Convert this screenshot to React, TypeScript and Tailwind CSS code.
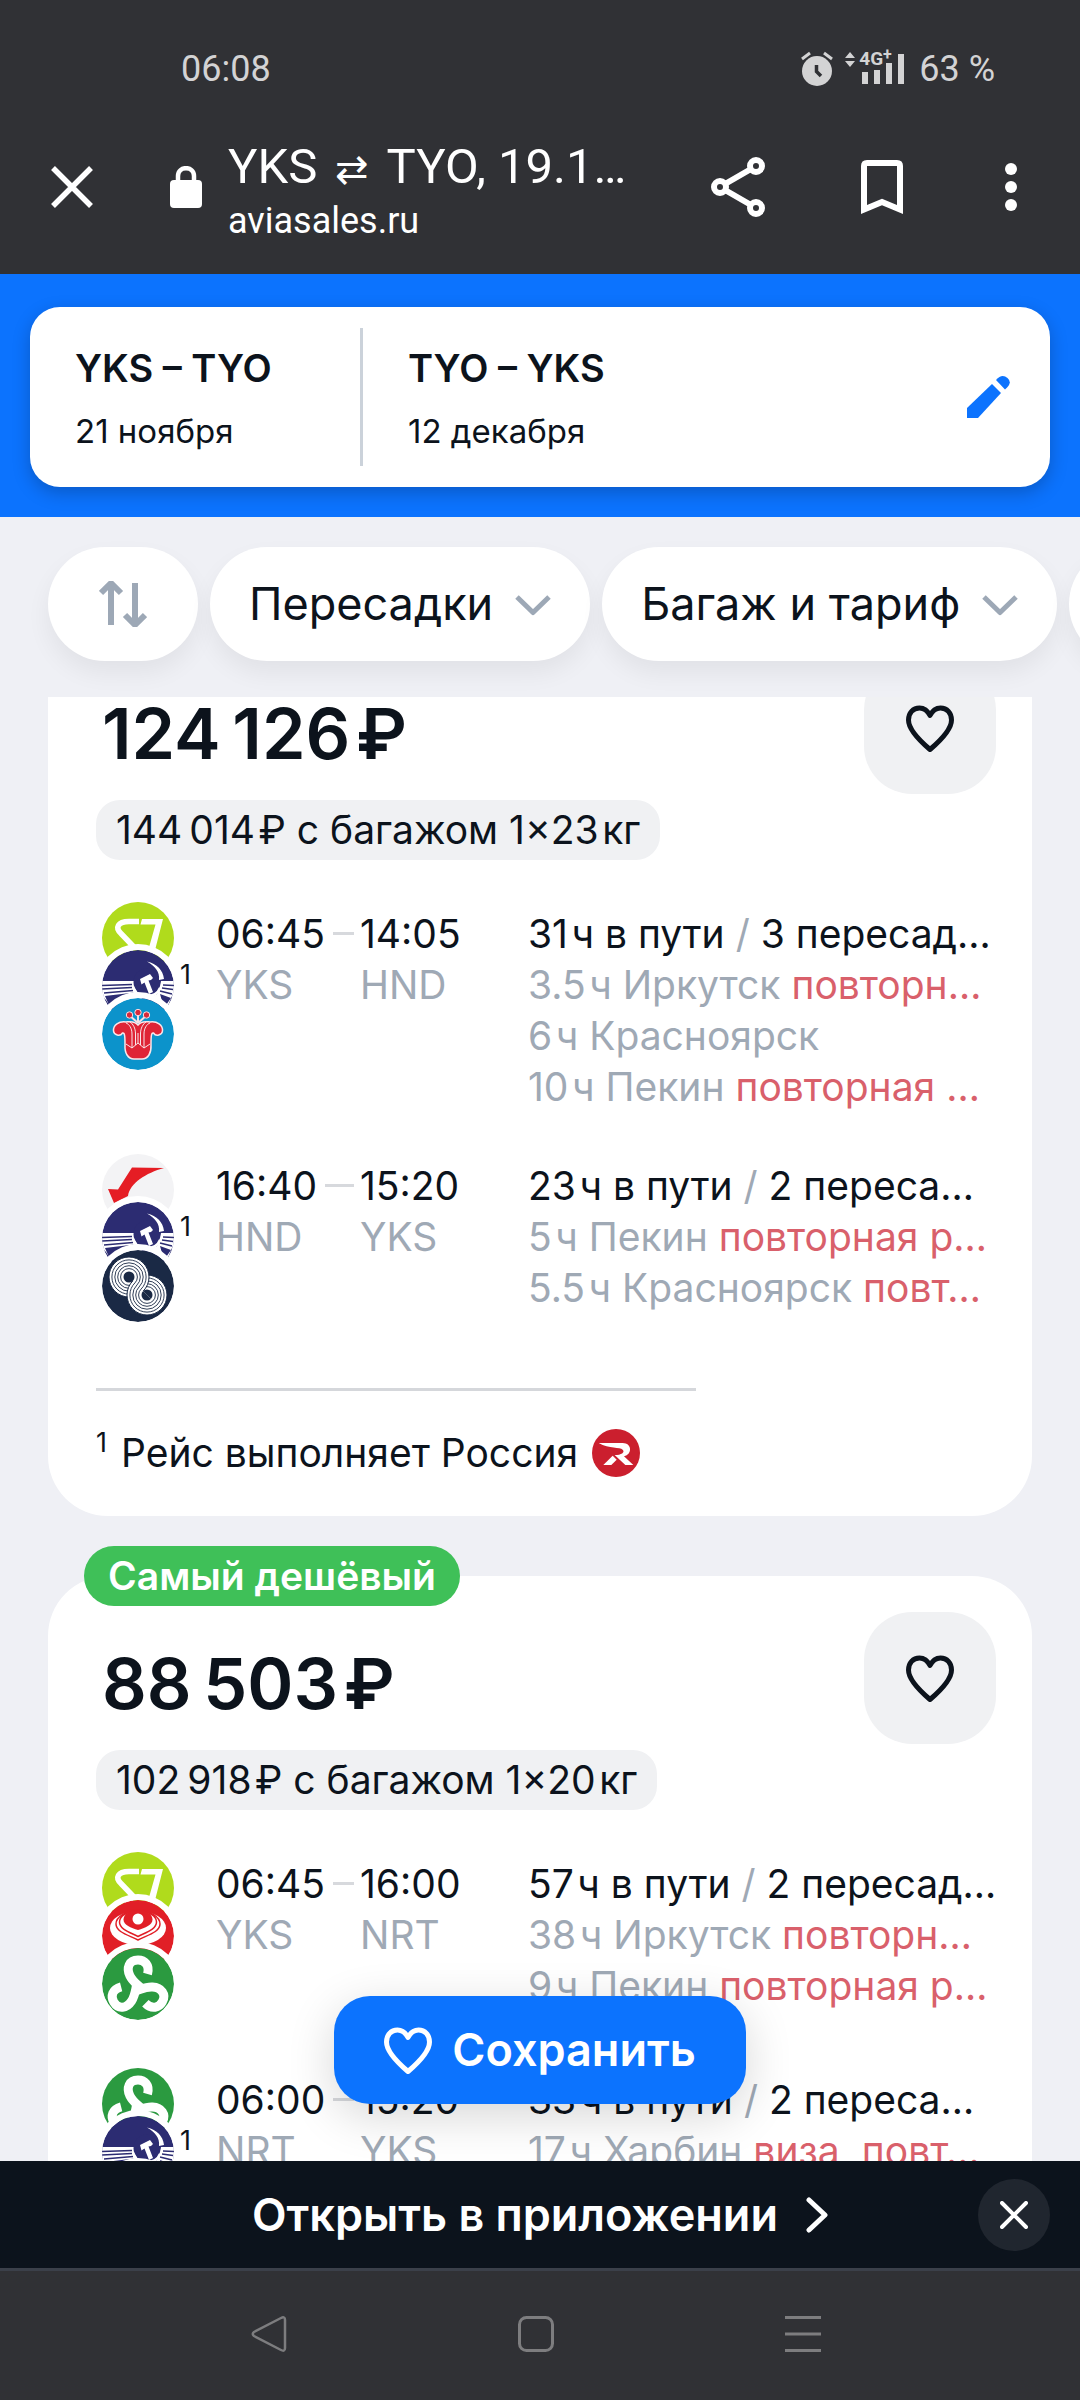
import React from "react";

// Hair space before units, thin space between thousands.
const H = "\u200a";
const T = "\u2009";

function Heart({ className }: { className: string }) {
  return (
    <svg viewBox="0 0 48 48" fill="none" stroke="currentColor" strokeWidth="5" strokeLinejoin="round" className={className} aria-hidden="true">
      <path d="M24 11.5C21.5 6.500 17.500 4 13.500 4C7 4 2.500 9 2.500 16C2.500 26 14 37 24 45.500C34 37 45.500 26 45.500 16C45.500 9 41 4 34.500 4C30.500 4 26.500 6.500 24 11.500Z" />
    </svg>
  );
}

function ChevronDown() {
  return (
    <svg viewBox="0 0 36 36" fill="none" stroke="#9da8b6" strokeWidth="5" strokeLinecap="butt" className="size-9 shrink-0" aria-hidden="true">
      <path d="M2 11L18 26.500L34 11" strokeLinejoin="round" />
    </svg>
  );
}

function S7() {
  return (
    <>
      <circle cx="36" cy="36" r="36" fill="#b0db1c" />
      <path d="M37 19.500H27C15.500 19.500 13 26 19 31.500L31 44L22 56" fill="none" stroke="#fff" strokeWidth="5.500" />
      <path d="M40 17H61L51 56H44L53.500 22.500H38.500Z" fill="#fff" />
    </>
  );
}

function Aeroflot() {
  return (
    <>
      <circle cx="36" cy="36" r="36" fill="#2c2c72" />
      <path d="M0 31H32L36 45L42 47L14 66L4 50L0 46Z" fill="#fff" />
      <path d="M72 31H59L55 44L48 47L64 60L70 46L72 42Z" fill="#fff" />
      <g stroke="#2c2c72" strokeWidth="1.300" fill="none">
        <path d="M0 35.500L30 34.500M0 39L30 37.500M2 43L31 40.500M61 35L72 35.500M60 38L71 39.500M58 41L70 44" />
      </g>
      <path d="M3 46L32 42.500L20 48L10 62ZM69 48L58 44L62 58Z" fill="#2c2c72" />
      <circle cx="45" cy="32" r="13.500" fill="#2c2c72" />
      <path d="M45 11.500C55 14 61 20 62 29L57 30C58 22 53 16 45 11.500Z" fill="#fff" />
      <path d="M38 29L48 24L51 28L49 30L46.500 30.500L51 42L47 44L42.500 32.500L39.500 34.500Z" fill="#fff" />
      <path d="M31 37C33 43 38 47 45 46C52 46 56 43 58 38" fill="none" stroke="#fff" strokeWidth="2.500" />
    </>
  );
}

function ChinaSouthern() {
  return (
    <>
      <circle cx="36" cy="36" r="36" fill="#0c93cb" />
      <path d="M36 25L27 17M36 25V14M36 25L45 17" stroke="#f7dfe4" strokeWidth="2" />
      <g fill="#d8283a" stroke="#f7dfe4" strokeWidth="1">
        <circle cx="27.500" cy="17" r="3.200" />
        <circle cx="36" cy="14.500" r="3.200" />
        <circle cx="44.500" cy="17" r="3.200" />
      </g>
      <path d="M36 27C32 22 26 24 24 24C17 23 11 27 11.500 33C12 37 18 39 20.500 35C23 34 23 40 23 47C22.500 55 26 61 32 61H40C46 61 49.500 55 49 47C49 40 49 34 51.500 35C54 39 60 37 60.500 33C61 27 55 23 48 24C46 24 40 22 36 27Z" fill="#df2436" stroke="#f9e6ea" strokeWidth="1.500" />
      <path d="M24 46L30 50L36 45L42 50L48 46M30 50V36C30 30 27 26 24 25M42 50V36C42 30 45 26 48 25M36 45V35M33.500 47V36C33.500 30 31 26 28 24M38.500 47V36C38.500 30 41 26 44 24" fill="none" stroke="#f9e6ea" strokeWidth="1" />
    </>
  );
}

function RedSwoosh() {
  return (
    <>
      <circle cx="36" cy="36" r="36" fill="#f3f3f5" />
      <path d="M30 13.500L62 14C44 19 28 29 26 42L12 49L6 35L16 35.500Z" fill="#e51d24" />
    </>
  );
}

function Ring({ cx, cy }: { cx: number; cy: number }) {
  return (
    <>
      <circle cx={cx} cy={cy} r="20" fill="#fff" stroke="#1a2945" strokeWidth="1" />
      {[8.4, 11.300, 14.200, 17.100].map((r) => (
        <circle key={r} cx={cx} cy={cy} r={r} fill="none" stroke="#1a2945" strokeWidth="0.9" />
      ))}
      <circle cx={cx} cy={cy} r="5.500" fill="#1a2945" />
    </>
  );
}

function Rings() {
  return (
    <>
      <clipPath id="lower-half">
        <path d="M0 0L72 72H0Z" />
      </clipPath>
      <circle cx="36" cy="36" r="36" fill="#1a2945" />
      <Ring cx={45} cy={45} />
      <Ring cx={27} cy={27} />
      <g clipPath="url(#lower-half)">
        <Ring cx={45} cy={45} />
      </g>
    </>
  );
}

function Lotus() {
  return (
    <>
      <circle cx="36" cy="36" r="36" fill="#e11f27" />
      <ellipse cx="36" cy="28" rx="28" ry="17" fill="#fff" />
      <g fill="#fff" stroke="#e11f27" strokeWidth="1.500">
        <path d="M36 11C49 11 58 17 58 24C58 32 46 35 36 40C26 35 14 32 14 24C14 17 23 11 36 11Z" />
        <path d="M36 11C47 11 54.500 16 54.500 22C54.500 29 45 32 36 36.500C27 32 17.500 29 17.500 22C17.500 16 25 11 36 11Z" />
      </g>
      <path d="M16 16Q36 6 56 16L50 12Q36 6 22 12Z" fill="#e11f27" />
      <path d="M36 10C45 10 50.500 14.500 50.500 19.500C50.500 25 43 28 36 30C29 28 21.500 25 21.500 19.500C21.500 14.500 27 10 36 10Z" fill="#e11f27" />
      <circle cx="36" cy="19" r="5.500" fill="#fff" />
    </>
  );
}

function Spring() {
  const arm = "M45.500 26C48 17 42.500 12 36 12C27 12 24 20 28 28C31 34 36 37 40 41";
  return (
    <>
      <circle cx="36" cy="36" r="36" fill="#2b9a40" />
      <g fill="none" stroke="#fff" strokeWidth="9">
        <path d={arm} />
        <path d={arm} transform="rotate(120 36 40)" />
        <path d={arm} transform="rotate(240 36 40)" />
      </g>
      <circle cx="36" cy="40" r="6" fill="#fff" />
    </>
  );
}

function Rossiya() {
  return (
    <>
      <circle cx="36" cy="36" r="36" fill="#cb1f2e" />
      <path d="M10 21H46C60 21 61 38 48 41L62 54H50L34 39C44 39 50 35 46 31C42 27 26 30 10 21Z" fill="#fff" />
      <path d="M17 54L31 40L37 46L29 54Z" fill="#fff" />
    </>
  );
}

type LogoKind = "s7" | "aeroflot" | "southern" | "swoosh" | "rings" | "lotus" | "spring";
const LOGOS: Record<LogoKind, () => React.JSX.Element> = {
  s7: S7,
  aeroflot: Aeroflot,
  southern: ChinaSouthern,
  swoosh: RedSwoosh,
  rings: Rings,
  lotus: Lotus,
  spring: Spring,
};

type Stop = { text: string; warn?: string };
type Leg = {
  logos: LogoKind[];
  note?: boolean;
  dep: string;
  arr: string;
  from: string;
  to: string;
  duration: string;
  changes: string;
  stops: Stop[];
};

const FIRST: Leg[] = [
  {
    logos: ["s7", "aeroflot", "southern"], note: true,
    dep: "06:45", arr: "14:05", from: "YKS", to: "HND",
    duration: `31${H}ч в пути`, changes: "3 пересад…",
    stops: [
      { text: `3.5${H}ч Иркутск`, warn: "повторн…" },
      { text: `6${H}ч Красноярск` },
      { text: `10${H}ч Пекин`, warn: "повторная …" },
    ],
  },
  {
    logos: ["swoosh", "aeroflot", "rings"], note: true,
    dep: "16:40", arr: "15:20", from: "HND", to: "YKS",
    duration: `23${H}ч в пути`, changes: "2 переса…",
    stops: [
      { text: `5${H}ч Пекин`, warn: "повторная р…" },
      { text: `5.5${H}ч Красноярск`, warn: "повт…" },
    ],
  },
];

const SECOND: Leg[] = [
  {
    logos: ["s7", "lotus", "spring"],
    dep: "06:45", arr: "16:00", from: "YKS", to: "NRT",
    duration: `57${H}ч в пути`, changes: "2 пересад…",
    stops: [
      { text: `38${H}ч Иркутск`, warn: "повторн…" },
      { text: `9${H}ч Пекин`, warn: "повторная р…" },
    ],
  },
  {
    logos: ["spring", "aeroflot", "s7"], note: true,
    dep: "06:00", arr: "15:20", from: "NRT", to: "YKS",
    duration: `33${H}ч в пути`, changes: "2 переса…",
    stops: [{ text: `17${H}ч Харбин`, warn: "виза, повт…" }],
  },
];

function LegRow({ leg }: { leg: Leg }) {
  return (
    <li className="grid grid-cols-[120px_144px_168px_minmax(0,1fr)] text-[39px] leading-[51px]">
      <div className="flex items-center self-start pl-1.5">
        <div className="flex flex-col">
          {leg.logos.map((kind, i) => {
            const Logo = LOGOS[kind];
            return (
              <svg key={i} viewBox="0 0 72 72" className={i === 0 ? "size-[72px]" : "-mt-6 size-[72px] rounded-full ring-6 ring-white"} aria-hidden="true">
                <Logo />
              </svg>
            );
          })}
        </div>
        {leg.note && <span className="-mt-6 pl-1.5 text-[27px] leading-none">1</span>}
      </div>
      <div className="-mb-1.5 pt-1.5">
        <div className="flex items-center">
          <span>{leg.dep}</span>
          <span className="mr-1.5 ml-2 h-[3px] flex-1 bg-[#d7d9dd]" />
        </div>
        <div className="text-[#9fa9b5]">{leg.from}</div>
      </div>
      <div className="-mb-1.5 pt-1.5">
        <div>{leg.arr}</div>
        <div className="text-[#9fa9b5]">{leg.to}</div>
      </div>
      <div className="-mb-1.5 pt-1.5 whitespace-nowrap">
        <div>
          {leg.duration} <span className="text-[#9fa9b5]">/</span> {leg.changes}
        </div>
        {leg.stops.map((s) => (
          <div key={s.text} className="text-[#9fa9b5]">
            {s.text} {s.warn && <span className="text-[#d9606b]">{s.warn}</span>}
          </div>
        ))}
      </div>
    </li>
  );
}

function Ticket({ price, baggage, legs, badge, footnote }: { price: string; baggage: string; legs: Leg[]; badge?: string; footnote?: string }) {
  return (
    <article className="relative rounded-[60px] bg-white pt-9 pr-9 pb-[38px] pl-12">
      {badge && (
        <span className="absolute -top-[30px] left-9 rounded-full bg-[#3fc058] px-6 text-[39px] leading-[60px] font-semibold text-white">{badge}</span>
      )}
      <div className="flex items-start justify-between">
        <h2 className="pt-[30px] pl-1.5 text-[70px] leading-[84px] font-semibold whitespace-nowrap">{price}</h2>
        <button type="button" aria-label="В избранное" className="flex size-[132px] items-center justify-center rounded-[48px] bg-[#f0f1f3]">
          <Heart className="size-12" />
        </button>
      </div>
      <p className="mt-1.5 w-fit rounded-3xl bg-[#f0f1f3] px-5 text-[39px] leading-[60px] whitespace-nowrap">{baggage}</p>
      <ul className="mt-[42px] flex flex-col gap-12">
        {legs.map((leg, i) => (
          <LegRow key={i} leg={leg} />
        ))}
      </ul>
      {footnote && (
        <>
          <hr className="mt-[66px] w-2/3 border-t-[3px] border-[#d5d7db]" />
          <p className="mt-9 flex h-[51px] items-center text-[39px] leading-[51px]">
            <span className="-mt-5 mr-3.5 text-[27px] leading-none">1</span>
            {footnote}
            <svg viewBox="0 0 72 72" className="ml-3.5 size-12" aria-hidden="true">
              <Rossiya />
            </svg>
          </p>
        </>
      )}
    </article>
  );
}

function StatusBar() {
  return (
    <div className="flex h-[138px] items-center justify-between pr-[85px] pl-[181px] text-[36px] text-[#d3d3d4]">
      <span>06:08</span>
      <div className="flex items-center">
        <svg viewBox="0 0 32 36" className="h-9 w-8" aria-hidden="true">
          <circle cx="16" cy="20" r="15" fill="#d3d3d4" />
          <path d="M1 8L9 2M31 8L23 2" stroke="#d3d3d4" strokeWidth="3" />
          <path d="M15.500 14V20.500L20 25" fill="none" stroke="#303135" strokeWidth="3.500" />
        </svg>
        <div className="relative ml-3 h-9 w-[60px]">
          <svg viewBox="0 0 60 36" fill="#d3d3d4" className="h-9 w-[60px]" aria-hidden="true">
            <path d="M0 7L5 1L10 7ZM0 10H10L5 16Z" />
            <path d="M17 21h6v12h-6zM29 19h6v14h-6zM41 12h6v21h-6zM53 3h6v30h-6z" />
          </svg>
          <span className="absolute -top-0.5 left-3.5 text-[19px] leading-5 font-bold">
            4G<span className="align-top text-[16px] leading-3">+</span>
          </span>
        </div>
        <span className="ml-[14px]">63 %</span>
      </div>
    </div>
  );
}

function BrowserBar() {
  return (
    <div className="flex h-[98px] items-center pr-[63px] pl-[51px] text-white">
      <button type="button" aria-label="Закрыть вкладку">
        <svg viewBox="0 0 42 42" className="size-[42px]" stroke="currentColor" strokeWidth="5.500" aria-hidden="true">
          <path d="M2 2L40 40M40 2L2 40" />
        </svg>
      </button>
      <svg viewBox="0 0 32 42" className="ml-[77px] h-[42px] w-8 shrink-0" aria-hidden="true">
        <rect y="14" width="32" height="28" rx="4" fill="currentColor" />
        <path d="M8 16V10C8 -0.500 24 -0.500 24 10V16" fill="none" stroke="currentColor" strokeWidth="4.500" />
      </svg>
      <div className="mr-[70px] ml-[26px] min-w-0 flex-1 pt-1.5 whitespace-nowrap">
        <div className="text-[49px] leading-[62px]">
          YKS <span className="mx-1.5 text-[40px] leading-none">⇄</span> TYO, 19.1…
        </div>
        <div className="text-[36px] leading-[46px]">aviasales.ru</div>
      </div>
      <button type="button" aria-label="Поделиться">
        <svg viewBox="0 0 54 60" className="h-[60px] w-[54px]" fill="none" stroke="currentColor" strokeWidth="6" aria-hidden="true">
          <circle cx="9" cy="30" r="6" />
          <circle cx="45" cy="9" r="6" />
          <circle cx="45" cy="51" r="6" />
          <path d="M14 27L40 12M14 33L40 48" />
        </svg>
      </button>
      <button type="button" aria-label="Добавить в закладки" className="ml-24">
        <svg viewBox="0 0 42 54" className="h-[54px] w-[42px]" fill="none" stroke="currentColor" strokeWidth="6" aria-hidden="true">
          <path d="M3 49.500V6Q3 3 6 3H36Q39 3 39 6V49.500L21 42Z" />
        </svg>
      </button>
      <button type="button" aria-label="Меню" className="ml-[102px]">
        <svg viewBox="0 0 12 48" className="h-12 w-3" fill="currentColor" aria-hidden="true">
          <circle cx="6" cy="6" r="6" />
          <circle cx="6" cy="24" r="6" />
          <circle cx="6" cy="42" r="6" />
        </svg>
      </button>
    </div>
  );
}

function Route({ title, date }: { title: string; date: string }) {
  return (
    <div className="px-[45px]">
      <div className="text-[38px] leading-[50px] font-semibold">{title}</div>
      <div className="mt-[18px] text-[33px] leading-[40px]">{date}</div>
    </div>
  );
}

function FilterPill({ label }: { label: string }) {
  return (
    <button type="button" className="flex h-[114px] shrink-0 items-center gap-[22px] rounded-full bg-white px-[39px] text-[45px] whitespace-nowrap shadow-[0_12px_24px_rgba(0,0,0,0.06)]">
      {label}
      <ChevronDown />
    </button>
  );
}

export default function App() {
  return (
    <div className="flex h-screen flex-col overflow-hidden bg-[#eff0f5] font-[Inter,sans-serif] text-[#0c131c]">
      <header className="shrink-0 bg-[#303135] pb-[38px] font-[Roboto,sans-serif]">
        <StatusBar />
        <BrowserBar />
      </header>

      <section className="shrink-0 bg-[#0c73fe] px-[30px] pt-[33px] pb-[30px]">
        <div className="flex h-[180px] items-center rounded-[30px] bg-white shadow-[0_6px_18px_rgba(0,0,0,0.22)]">
          <div className="w-[330px]">
            <Route title="YKS – TYO" date="21 ноября" />
          </div>
          <div className="h-[138px] w-[3px] bg-[#cbd2da]" />
          <div className="flex-1">
            <Route title="TYO – YKS" date="12 декабря" />
          </div>
          <button type="button" aria-label="Изменить поиск" className="mr-10">
            <svg viewBox="0 0 44 44" className="size-11" fill="#0c73fe" aria-hidden="true">
              <path d="M1 33L26 9L35 18L12 43H1Z" />
              <path d="M30 5Q36 -2 41.500 3Q47 8 39 14.500Z" />
            </svg>
          </button>
        </div>
      </section>

      <nav aria-label="Фильтры" className="flex shrink-0 gap-3 overflow-hidden pt-[30px] pb-9 pl-12">
        <button type="button" aria-label="Сортировка" className="flex h-[114px] w-[150px] shrink-0 items-center justify-center rounded-full bg-white shadow-[0_12px_24px_rgba(0,0,0,0.06)]">
          <svg viewBox="0 0 48 48" className="size-12" fill="none" stroke="#9da8b6" strokeWidth="6" strokeLinejoin="bevel" aria-hidden="true">
            <path d="M12 45V3M2 13L12 3L22 13M36 3V45M26 35L36 45L46 35" />
          </svg>
        </button>
        <FilterPill label="Пересадки" />
        <FilterPill label="Багаж и тариф" />
        <button type="button" aria-label="Другие фильтры" className="h-[114px] w-[300px] shrink-0 rounded-full bg-white shadow-[0_12px_24px_rgba(0,0,0,0.06)]" />
      </nav>

      <main className="relative min-h-0 flex-1 overflow-hidden">
        <div className="-mt-[71px] flex flex-col gap-[60px] px-12">
          <Ticket price={`124${T}126${H}₽`} baggage={`144${T}014${H}₽ с багажом 1×23${H}кг`} legs={FIRST} footnote="Рейс выполняет Россия" />
          <Ticket price={`88${T}503${H}₽`} baggage={`102${T}918${H}₽ с багажом 1×20${H}кг`} legs={SECOND} badge="Самый дешёвый" />
        </div>
        <div className="absolute inset-x-0 bottom-[57px] flex justify-center">
          <button type="button" className="flex h-[108px] items-center gap-5 rounded-[36px] bg-[#0c73fe] px-[50px] text-[45px] font-semibold text-white shadow-[0_12px_48px_rgba(0,0,0,0.16)]">
            <Heart className="size-12" />
            Сохранить
          </button>
        </div>
      </main>

      <div className="relative flex h-[110px] shrink-0 items-center justify-center border-b-[3px] border-[#3b404a] bg-[#0c131c] text-white">
        <a href="#app" className="flex items-center gap-7 text-[45px] font-semibold">
          Открыть в приложении
          <svg viewBox="0 0 22 36" className="h-9 w-[22px]" fill="none" stroke="currentColor" strokeWidth="5" strokeLinecap="round" strokeLinejoin="round" aria-hidden="true">
            <path d="M3 3L19 18L3 33" />
          </svg>
        </a>
        <button type="button" aria-label="Скрыть" className="absolute right-[30px] flex size-[72px] items-center justify-center rounded-full bg-[#20262f]">
          <svg viewBox="0 0 28 28" className="size-7" stroke="currentColor" strokeWidth="4" strokeLinecap="round" aria-hidden="true">
            <path d="M2 2L26 26M26 2L2 26" />
          </svg>
        </button>
      </div>

      <nav aria-label="Система" className="flex h-[129px] shrink-0 items-center justify-center bg-[#303135] pr-2 pb-1 text-[#7d7d7f]">
        <button type="button" aria-label="Назад">
          <svg viewBox="0 0 36 36" className="size-9" fill="none" stroke="currentColor" strokeWidth="2.500" strokeLinejoin="round" aria-hidden="true">
            <path d="M3 16Q0.500 18 3 20L30 34Q34 36 34 32V4Q34 0 30 2Z" />
          </svg>
        </button>
        <button type="button" aria-label="Домой" className="mx-[231px]">
          <svg viewBox="0 0 36 36" className="size-9" fill="none" stroke="currentColor" strokeWidth="3" aria-hidden="true">
            <rect x="1.500" y="1.500" width="33" height="33" rx="7" />
          </svg>
        </button>
        <button type="button" aria-label="Недавние">
          <svg viewBox="0 0 36 36" className="size-9" stroke="currentColor" strokeWidth="3" aria-hidden="true">
            <path d="M0 1.500H36M0 18H36M0 34.500H36" />
          </svg>
        </button>
      </nav>
    </div>
  );
}
